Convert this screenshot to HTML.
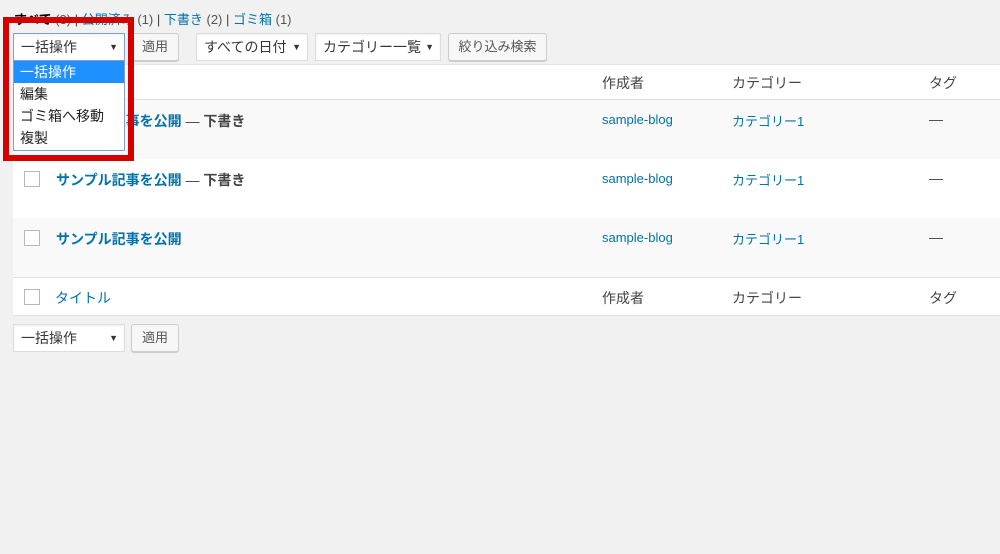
<!DOCTYPE html>
<html><head><meta charset="utf-8"><style>
*{box-sizing:border-box;margin:0;padding:0}
body{width:1000px;height:554px;background:#f1f1f1;font-family:"Liberation Sans","Noto Sans CJK JP",sans-serif;font-size:13px;color:#444;position:relative;overflow:hidden}
.a{position:absolute;white-space:nowrap}
a{color:#0073aa;text-decoration:none}
.sel{position:absolute;background:#fff;border:1px solid #ddd;height:28px;line-height:26px;padding-left:7px;color:#32373c;font-size:14px;box-shadow:inset 0 1px 2px rgba(0,0,0,.07)}
.sel:after{content:"▼";position:absolute;right:6px;top:0;font-size:9px;color:#333}
.btn{position:absolute;background:#f7f7f7;border:1px solid #ccc;border-radius:3px;height:28px;line-height:26px;text-align:center;color:#555;font-size:13px;box-shadow:0 1px 0 #ccc}
.row{position:absolute;left:13px;width:987px}
.cb{position:absolute;left:11px;width:16px;height:16px;border:1px solid #b4b9be;background:#fff}
.t{position:absolute;font-size:14px}
</style></head><body>
<div class="a" style="left:14px;top:9px;font-size:13px"><b style="color:#000">すべて</b> <span style="color:#555">(3)</span> | <a>公開済み</a> <span style="color:#555">(1)</span> | <a>下書き</a> <span style="color:#555">(2)</span> | <a>ゴミ箱</a> <span style="color:#555">(1)</span></div>

<div class="btn" style="left:131px;top:33px;width:48px">適用</div>
<div class="sel" style="left:196px;top:33px;width:112px">すべての日付</div>
<div class="sel" style="left:315px;top:33px;width:126px">カテゴリー一覧</div>
<div class="btn" style="left:448px;top:33px;width:99px">絞り込み検索</div>

<div class="row" style="top:64px;height:36px;background:#fff;border-top:1px solid #e5e5e5;border-bottom:1px solid #e1e1e1"></div>
<div class="row" style="top:100px;height:59px;background:#f9f9f9"></div>
<div class="row" style="top:159px;height:59px;background:#fff"></div>
<div class="row" style="top:218px;height:60px;background:#f9f9f9;border-bottom:1px solid #e1e1e1"></div>
<div class="row" style="top:278px;height:37px;background:#fff;box-shadow:0 1px 1px rgba(0,0,0,.06)"></div>

<div class="t" style="left:602px;top:73px">作成者</div>
<div class="t" style="left:732px;top:73px">カテゴリー</div>
<div class="t" style="left:929px;top:73px">タグ</div>

<div class="t" style="left:56px;top:111px"><a><b>サンプル記事を公開</b></a> — <b>下書き</b></div>
<div class="t" style="left:602px;top:112px;font-size:13px"><a>sample-blog</a></div>
<div class="t" style="left:732px;top:111px;font-size:13px"><a>カテゴリー1</a></div>
<div class="t" style="left:929px;top:111px">—</div>

<div class="cb" style="left:24px;top:171px"></div>
<div class="t" style="left:56px;top:170px"><a><b>サンプル記事を公開</b></a> — <b>下書き</b></div>
<div class="t" style="left:602px;top:171px;font-size:13px"><a>sample-blog</a></div>
<div class="t" style="left:732px;top:170px;font-size:13px"><a>カテゴリー1</a></div>
<div class="t" style="left:929px;top:170px">—</div>

<div class="cb" style="left:24px;top:230px"></div>
<div class="t" style="left:56px;top:229px"><a><b>サンプル記事を公開</b></a></div>
<div class="t" style="left:602px;top:230px;font-size:13px"><a>sample-blog</a></div>
<div class="t" style="left:732px;top:229px;font-size:13px"><a>カテゴリー1</a></div>
<div class="t" style="left:929px;top:229px">—</div>

<div class="cb" style="left:24px;top:289px"></div>
<div class="t" style="left:55px;top:288px"><a>タイトル</a></div>
<div class="t" style="left:602px;top:288px">作成者</div>
<div class="t" style="left:732px;top:288px">カテゴリー</div>
<div class="t" style="left:929px;top:288px">タグ</div>

<div class="sel" style="left:13px;top:324px;width:112px">一括操作</div>
<div class="btn" style="left:131px;top:324px;width:48px">適用</div>

<!-- open dropdown -->
<div class="a" style="left:3px;top:17px;width:131px;height:144px;border:6px solid #d40000"></div>
<div class="sel" style="left:13px;top:33px;width:112px;border-color:#7e9fd1">一括操作</div>
<div class="a" style="left:13px;top:60px;width:112px;height:91px;background:#fff;border:1px solid #7e9fd1;font-size:14px;color:#222">
<div style="background:#1e90ff;color:#fff;height:22px;line-height:22px;padding-left:6px">一括操作</div>
<div style="height:22px;line-height:22px;padding-left:6px">編集</div>
<div style="height:22px;line-height:22px;padding-left:6px">ゴミ箱へ移動</div>
<div style="height:22px;line-height:22px;padding-left:6px">複製</div>
</div>
</body></html>
